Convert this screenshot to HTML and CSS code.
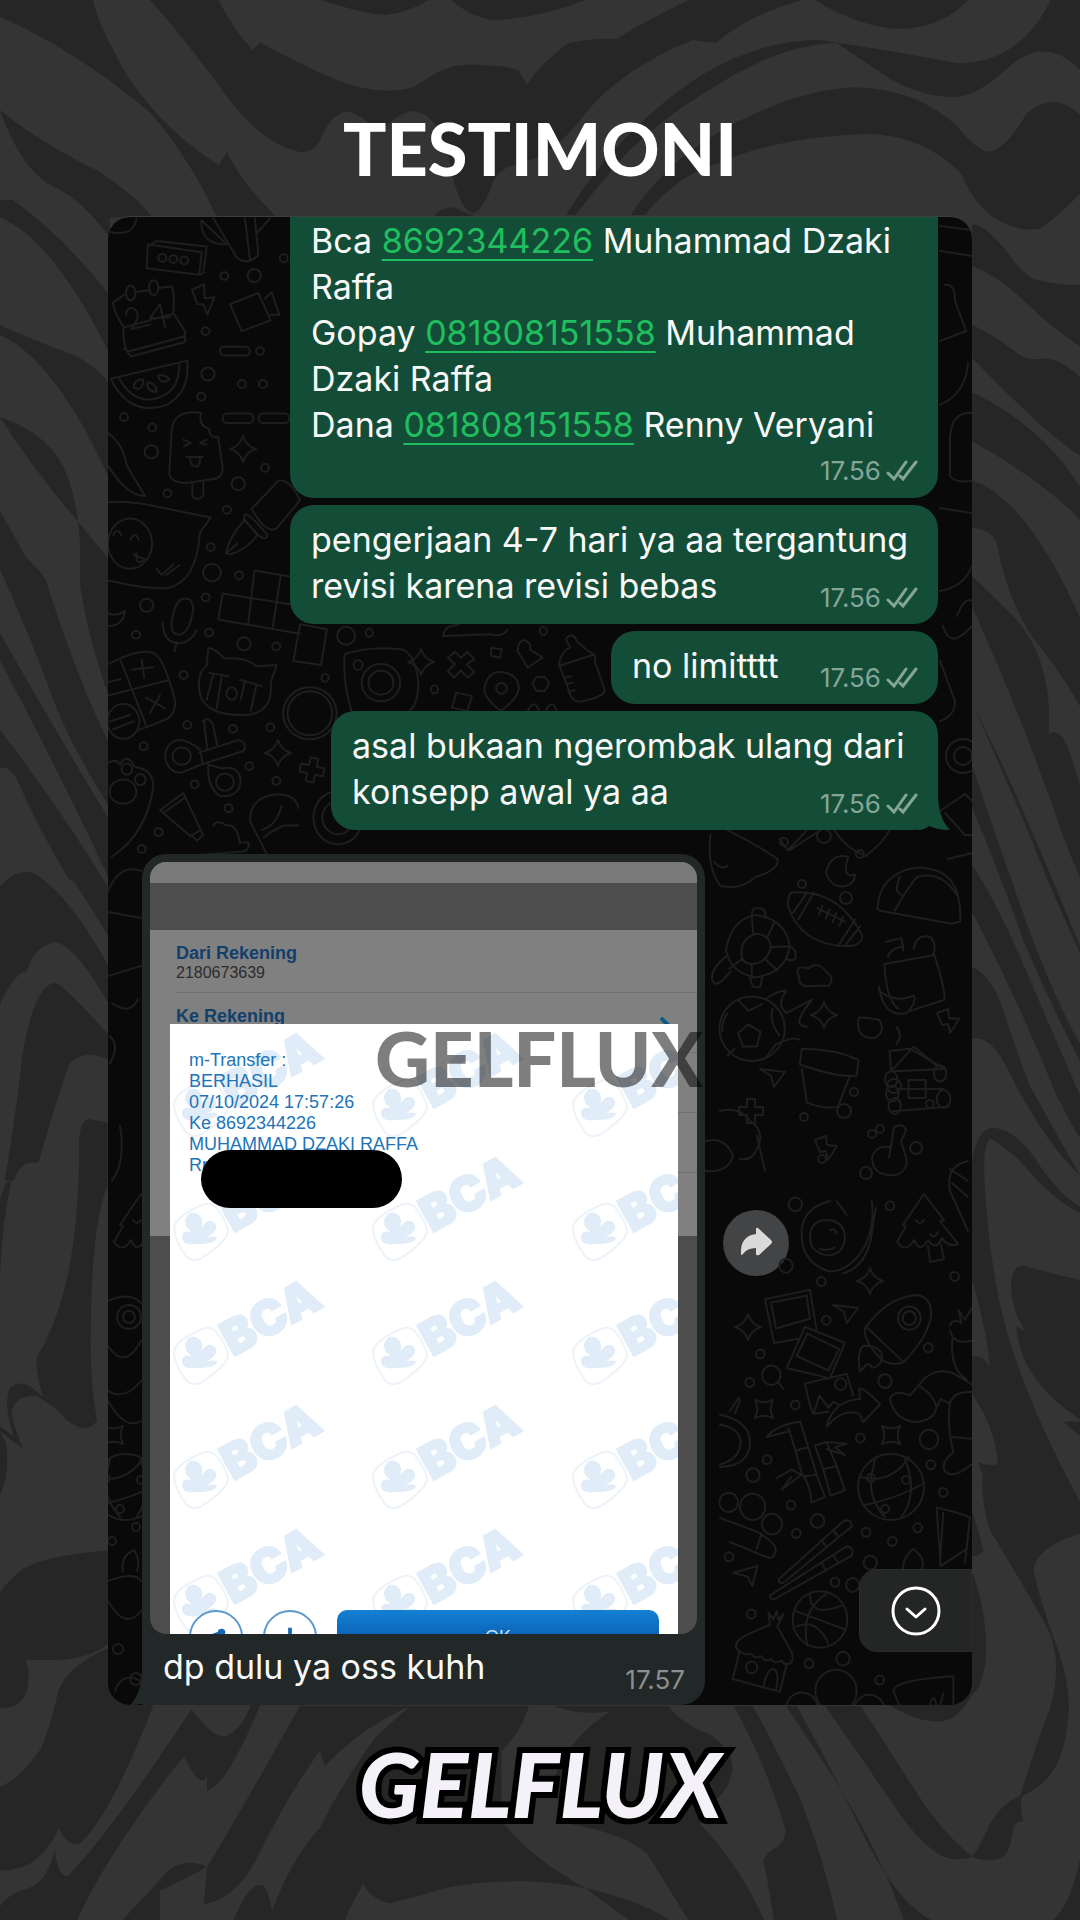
FILE: index.html
```html
<!DOCTYPE html>
<html lang="id">
<head>
<meta charset="utf-8">
<meta name="viewport" content="width=device-width, initial-scale=1">
<title>Testimoni – Gelflux</title>
<link rel="stylesheet" href="styles.css">
</head>
<body>
<svg class="marble" viewBox="0 0 1080 1920" preserveAspectRatio="xMidYMid slice" aria-hidden="true">
  <g transform="scale(.6888 .3333)">
    <path d="M0 0H135Q145 80 165 150Q185 240 215 310Q260 420 318 495L330 455Q345 530 400 650H315Q280 490 220 340Q110 150 0 50Z"/>
    <path d="M0 330Q60 430 140 510Q200 590 220 650H135Q110 590 70 550Q30 500 0 330Z"/>
    <path d="M218 0H317Q340 90 367 150L378 127Q430 190 490 240Q550 290 600 262C640 210 650 190 700 195Q740 198 753 212L765 255Q780 200 825 130Q850 115 895 116Q940 60 1000 0H1165Q1080 50 1040 128Q1020 125 1005 120Q900 210 850 340Q810 450 770 480Q725 500 717 540Q700 640 685 640Q665 620 655 500Q640 340 600 333Q580 335 550 400Q520 330 500 336Q480 345 465 420Q455 460 435 456Q380 430 330 290Q270 120 218 0Z"/>
    <path d="M465 0Q530 42 560 45Q590 40 622 0ZM655 0Q690 60 722 60Q790 50 850 0ZM1183 0Q1250 85 1310 87Q1370 80 1405 0ZM630 650Q640 620 660 622L690 650Z"/>
    <path d="M822 645Q870 480 940 350Q1060 120 1190 120Q1290 150 1390 190Q1480 190 1525 0H1568V210Q1520 110 1470 190Q1420 290 1385 292Q1330 290 1280 220L1215 130Q1150 130 1070 220Q940 370 880 530L835 645Z"/>
    <path d="M916 645Q960 500 1040 400Q1150 270 1240 262Q1330 265 1390 380Q1420 455 1435 455Q1460 450 1490 340Q1530 270 1568 345V580Q1540 640 1510 685Q1480 695 1460 670Q1420 640 1395 520Q1340 405 1260 402Q1130 410 1040 490Q980 530 936 645Z"/>
  </g>
  <g transform="translate(0 200) scale(.3333 .4337)">
    <path d="M0 0H40Q200 90 330 220V355Q160 90 0 40ZM240 0H400L460 40H330V85ZM625 0H780L830 40H655ZM0 287Q60 310 180 345Q280 370 330 425V645Q170 370 0 310ZM0 500Q160 540 205 640Q230 700 234 740L330 830V1150Q260 1000 240 880Q245 790 234 740Q120 640 0 500ZM0 715L80 825Q130 860 140 880Q230 1100 330 1255V1400Q230 1280 170 1170Q90 1000 0 850ZM0 997Q180 1240 330 1430V1568Q200 1350 0 1060ZM0 1220Q160 1400 290 1568H210Q130 1470 50 1325Q30 1300 0 1308Z"/>
  </g>
  <g transform="translate(0 480) scale(.3444 .4464)">
    <path d="M0 558Q180 740 314 910V1020Q220 900 180 860Q120 790 50 670Q30 640 0 643ZM0 910Q60 860 110 885Q200 930 314 1085V1170Q210 1030 155 1035Q100 1045 78 1100Q45 1100 0 1175Z"/>
    <path d="M15 1568Q50 1400 65 1290Q100 1130 160 1125Q180 1125 314 1240V1297Q240 1270 200 1310Q160 1400 112 1528Q60 1520 42 1568Z"/>
  </g>
  <g transform="translate(0 1100) scale(.3333 .523)">
    <path d="M0 190Q10 170 20 155H35Q0 250 0 380Z"/>
    <path d="M265 35Q240 40 238 80Q240 250 190 370Q160 440 112 490Q105 510 130 568Q70 525 30 550Q10 580 42 642L0 622V632L70 665Q40 620 35 595Q50 560 110 565Q160 580 200 610Q260 640 292 612Q270 540 273 440Q275 240 323 162V42Z"/>
    <path d="M0 632L20 655Q30 720 0 755ZM323 860Q120 870 60 900Q20 920 0 942V1160Q60 1165 80 1130Q95 1100 78 1068Q130 1070 200 1068Q290 1060 330 1035V860Z"/>
    <path d="M330 1045Q200 1080 175 1130Q140 1230 110 1250Q60 1295 0 1312V1472Q60 1470 100 1455Q150 1430 178 1390Q200 1425 240 1420Q330 1370 460 1157L400 1100Z"/>
    <path d="M0 1540Q30 1515 70 1508Q140 1500 165 1432Q175 1485 205 1482Q330 1400 575 1163Q640 1220 680 1215Q730 1200 755 1150H785Q680 1310 622 1318V1290Q600 1320 553 1252Q330 1430 230 1568H0Z"/>
    <path d="M900 1157H1230Q1080 1200 975 1272L960 1243Q860 1330 770 1450Q700 1530 612 1535L622 1465Q540 1440 480 1490L365 1568H480V1510L622 1465Q740 1340 900 1157ZM700 1568Q750 1490 790 1500Q810 1510 820 1568Z"/>
  </g>
  <g transform="translate(0 1640) scale(.6888 .3333)">
    <path d="M595 195H768Q755 280 728 330V540Q770 650 850 742Q750 700 650 740Q600 770 565 787Q535 770 528 728Q510 790 500 840H390Q420 660 465 560Q490 450 545 290Z"/>
    <path d="M805 195H970Q990 250 1030 280Q1070 340 1062 400Q1055 460 1030 490L1016 550Q1070 660 1110 840H1000L940 640Q910 580 830 550L800 440Q820 300 885 212Q840 225 805 195ZM850 742L915 840H975Q930 780 850 742Z"/>
  </g>
  <g transform="translate(940 200) scale(.3333 .574)">
    <path d="M96 42Q130 40 200 90Q260 140 300 140Q350 148 420 148V255Q350 230 250 175Q170 130 96 115ZM96 217Q160 235 240 270Q270 280 310 276Q350 272 420 308V445Q330 415 96 275ZM96 335Q300 390 420 500V557Q310 490 96 420ZM96 488Q260 520 420 728V882Q370 830 310 785Q210 720 170 600Q160 575 96 570Z"/>
    <path d="M96 655Q160 690 220 725Q340 800 325 930Q360 915 390 965L420 1020V1180Q380 1130 340 1060Q230 880 96 708ZM96 875L200 1000Q300 1130 420 1300V1312Q330 1200 250 1080ZM96 985Q180 1130 260 1260Q350 1400 420 1470V1500Q330 1400 250 1290Q170 1160 96 1058ZM96 1158Q180 1230 300 1400L420 1560V1568H355Q240 1400 96 1240ZM96 1335Q160 1350 200 1430Q240 1500 285 1568H252Q200 1510 180 1490Q140 1455 96 1460Z"/>
  </g>
  <g transform="translate(700 1080) scale(.3333 .5357)">
    <path d="M940 0H980Q1060 90 1140 178Q1040 120 940 0ZM1055 0H1110L1140 40V108Q1090 60 1055 0Z"/>
    <path d="M816 150Q830 90 878 88Q950 90 1020 160Q1080 215 1140 235V247Q1060 225 960 150Q900 118 870 108Q850 120 852 170Q860 300 900 420Q960 580 1140 787V845Q1010 870 1000 912Q1010 950 1060 1040Q1110 1120 1105 1180Q1095 1260 1050 1295Q1020 1320 965 1335Q958 1355 968 1382Q945 1380 938 1400Q930 1440 905 1450Q860 1460 816 1448Q720 1400 640 1320L482 1167H375Q480 1260 600 1370Q700 1455 770 1453Q800 1452 816 1448Q840 1430 870 1385Q910 1345 960 1335Q1000 1250 1050 1170Q1090 1080 1040 1020Q940 910 870 840Q840 780 848 735L832 712Q860 720 893 716Q890 670 850 620Q830 600 816 583V515Q850 510 868 535Q865 480 816 372Z"/>
    <path d="M816 805Q840 850 850 878Q835 887 816 888ZM816 918Q860 990 858 1070Q850 1130 816 1145Q770 1200 700 1196Q620 1190 560 1160L800 1100ZM1140 372Q1050 360 970 345Q930 345 933 390Q940 440 978 468Q960 462 948 458Q960 560 1140 632V662Q1110 650 1090 636L1140 636ZM1140 1450Q1110 1540 1055 1568H1140Z"/>
    <path d="M102 1167H158Q240 1260 300 1340Q370 1450 412 1568H222Q205 1500 190 1455Q200 1440 235 1428Q260 1415 255 1395Q200 1280 102 1167ZM258 1167H290Q400 1290 500 1420Q600 1540 700 1568H612Q540 1440 400 1300Z"/>
  </g>
</svg>

<main class="page">
  <h1 class="title">TESTIMONI</h1>

  <section class="chat" aria-label="Percakapan">
    <svg class="doodles" viewBox="108 216 864 1488" preserveAspectRatio="xMidYMin slice" aria-hidden="true">
      <defs>
        <path id="spark" d="M0-13Q3-3 13 0Q3 3 0 13Q-3 3-13 0Q-3-3 0-13Z"/>
        <path id="plus" d="M-4-12H4V-4H12V4H4V12H-4V4H-12V-4H-4Z"/>
        <path id="plane" d="M-13-8L12-5L1 10L-2-1Z"/>
        <path id="bolt" d="M-11-8L0-12L1-3L11-2L2 12L0 3L-6 4Z"/>
        <g id="tree"><path d="M0-34L20-8L16-7L34 16Q24 20 18 10Q12 24 4 12Q-4 26-10 12Q-18 26-27 14L-18-2L-21-3ZM4 18L6 34L20 31L17 17"/><path d="M-8-8Q-4-2 0-8M6 6Q10 12 14 4"/></g>
        <g id="globe"><circle r="33"/><path d="M-31-10Q0-2 18-30M-26 18Q10 10 33-4M-20-9Q-22 12-6 30M14-28Q28 6 10 31M-16-28L-20-9"/><circle cx="-20" cy="-9" r="4"/><circle cx="15" cy="-7" r="4"/><circle cx="-6" cy="22" r="4"/></g>
        <g id="dots"><circle cx="4" cy="6" r="4"/><circle cx="44" cy="0" r="7"/><circle cx="80" cy="18" r="4"/><circle cx="22" cy="48" r="4"/><circle cx="66" cy="62" r="6"/></g>
      </defs>
      <g transform="translate(0 200) scale(.3333 .4337)">
        <path d="M324 70Q400 85 410 40M440 155L443 105L470 92L620 105L610 165L600 170ZM605 120L598 168M443 100L605 118M605 45Q600 100 680 100L605 45M640 40L710 130Q740 150 775 125L765 40M735 40L750 135M770 75L810 40"/>
        <path d="M338 235L375 215M410 210L450 205M478 200L515 197Q525 210 520 258L555 300V325L395 358Q370 350 370 290Q345 260 338 235M370 292L520 260M372 340L385 347L555 312M576 205L612 192L614 224L643 222L622 262L610 238L592 238ZM690 238L775 212L812 275L725 300ZM795 225L815 210L838 262L812 262"/>
        <path d="M378 262Q382 240 405 250Q425 262 395 295L450 285M450 270L480 238L495 290M450 270L512 268"/>
        <path d="M332 410L562 368Q570 440 500 470Q390 500 332 410ZM355 406Q400 470 470 455Q540 440 538 374M400 430Q405 410 430 412Q430 440 400 430ZM442 418Q470 420 470 440Q440 440 442 418ZM475 402Q500 400 508 412Q480 425 475 402Z"/>
        <path d="M603 488Q520 480 515 530L508 630Q515 650 560 650L650 640Q675 630 665 600L655 545Q625 545 628 525Q595 520 603 488ZM577 650V680Q592 695 610 680V648M550 550L572 558L552 566M620 550L600 558L620 562M560 590H608M570 592Q572 615 592 612Q602 605 600 590"/>
        <path d="M324 535Q370 560 380 610L435 680Q380 680 324 610M324 695Q370 690 440 700L632 730L600 765Q590 880 500 893Q440 895 324 875M340 770Q350 752 364 770M392 780Q405 760 416 780M400 815L440 828M410 812Q405 840 430 830M470 848L485 862L520 838M498 862L538 840"/>
        <path d="M678 812Q690 770 735 735L772 770Q740 805 690 815ZM735 722Q755 725 802 770Q798 785 775 770L732 735ZM755 710L835 645Q870 640 900 690L830 755Q800 770 755 710ZM678 812L712 790M655 965L668 905L870 930M655 965L900 998M745 975L763 852L870 866M818 985L842 865M324 980Q370 980 375 945Q350 960 324 950"/>
        <path d="M515 970Q510 1000 540 1000Q570 995 580 940Q575 910 545 918Q525 925 515 970ZM488 972Q490 1020 540 1020Q575 1015 590 990M530 1018L524 1038M324 1068Q420 1030 460 1042Q490 1050 525 1150Q530 1180 500 1195L415 1220M362 1060L440 1212M324 1140L505 1105M397 1080L460 1075M425 1058L433 1100M438 1145L495 1170M480 1140L450 1180M330 1200L390 1185M340 1218L400 1200M324 1110L362 1102"/>
        <path d="M625 1030Q640 1030 675 1055Q740 1050 768 1073L830 1070L812 1110Q820 1180 740 1185Q590 1190 597 1110Q600 1080 620 1072ZM628 1088L685 1096M720 1104L785 1118M640 1092L620 1150M665 1096L650 1170M770 1115L752 1175M735 1108L722 1150"/>
        <path d="M600 1265Q560 1240 530 1243Q490 1255 497 1290Q510 1320 545 1318L608 1298ZM598 1272L715 1243Q745 1250 730 1268L610 1298M608 1200Q625 1188 638 1205L652 1255M612 1200L622 1265M625 1300Q620 1350 660 1372Q720 1375 722 1335Q715 1300 665 1308ZM480 1405L550 1365L602 1450L572 1465ZM492 1410L556 1375M575 1462L590 1475L610 1462L602 1450"/>
        <path d="M324 1295Q350 1285 360 1300Q380 1270 405 1305Q460 1310 460 1350Q440 1460 335 1512M750 1430Q750 1370 840 1368Q890 1372 895 1400M750 1430L800 1505M785 1450Q830 1440 845 1395M790 1468Q820 1450 850 1440L895 1440M640 1440Q650 1425 680 1440Q710 1435 720 1480L745 1478Q750 1495 730 1500L560 1510"/>
        <rect x="660" y="336" width="90" height="20" rx="12"/><rect x="668" y="490" width="92" height="22" rx="12"/><rect x="776" y="490" width="92" height="22" rx="12"/>
        <ellipse cx="390" cy="790" rx="66" ry="58"/><ellipse cx="545" cy="1280" rx="28" ry="20"/><ellipse cx="675" cy="1340" rx="27" ry="20"/><ellipse cx="369" cy="1362" rx="40" ry="28"/><ellipse cx="381" cy="1310" rx="16" ry="13"/><ellipse cx="421" cy="1334" rx="16" ry="13"/><ellipse cx="370" cy="1200" rx="48" ry="40"/><ellipse cx="695" cy="1136" rx="16" ry="14"/><ellipse cx="392" cy="212" rx="14" ry="17"/><ellipse cx="461" cy="200" rx="14" ry="17"/>
        <ellipse cx="763" cy="172" rx="20" ry="15"/><ellipse cx="624" cy="399" rx="20" ry="15"/><ellipse cx="454" cy="578" rx="20" ry="15"/><ellipse cx="715" cy="652" rx="20" ry="15"/><ellipse cx="636" cy="857" rx="27" ry="20"/><ellipse cx="440" cy="932" rx="20" ry="15"/><ellipse cx="732" cy="1021" rx="20" ry="15"/>
        <g class="pips"><ellipse cx="487" cy="131" rx="12" ry="9"/><ellipse cx="520" cy="134" rx="12" ry="9"/><ellipse cx="553" cy="137" rx="12" ry="9"/><ellipse cx="673" cy="173" rx="12" ry="9"/><ellipse cx="851" cy="132" rx="12" ry="9"/><ellipse cx="617" cy="300" rx="12" ry="9"/><ellipse cx="780" cy="346" rx="12" ry="9"/><ellipse cx="726" cy="422" rx="12" ry="9"/><ellipse cx="789" cy="422" rx="12" ry="9"/><ellipse cx="604" cy="451" rx="12" ry="9"/><ellipse cx="372" cy="498" rx="12" ry="9"/><ellipse cx="457" cy="522" rx="12" ry="9"/><ellipse cx="795" cy="615" rx="12" ry="9"/><ellipse cx="502" cy="674" rx="12" ry="9"/><ellipse cx="681" cy="712" rx="12" ry="9"/><ellipse cx="632" cy="798" rx="12" ry="9"/><ellipse cx="717" cy="863" rx="12" ry="9"/><ellipse cx="617" cy="914" rx="12" ry="9"/><ellipse cx="627" cy="995" rx="12" ry="9"/><ellipse cx="408" cy="1000" rx="12" ry="9"/><ellipse cx="829" cy="1027" rx="12" ry="9"/><ellipse cx="551" cy="1093" rx="12" ry="9"/><ellipse cx="562" cy="1208" rx="12" ry="9"/><ellipse cx="699" cy="1217" rx="12" ry="9"/><ellipse cx="811" cy="1214" rx="12" ry="9"/><ellipse cx="431" cy="1257" rx="12" ry="9"/><ellipse cx="748" cy="1303" rx="12" ry="9"/><ellipse cx="584" cy="1345" rx="12" ry="9"/><ellipse cx="829" cy="1337" rx="12" ry="9"/><ellipse cx="686" cy="1400" rx="12" ry="9"/><ellipse cx="476" cy="1455" rx="12" ry="9"/><ellipse cx="425" cy="1494" rx="12" ry="9"/></g>
      </g>
      <use href="#spark" x="243" y="448"/><use href="#spark" x="278" y="752"/>
      <g transform="translate(280 480) scale(.4464 .3333)">
        <path d="M30 540L45 430L105 445L92 552ZM145 520Q200 495 270 505Q300 510 310 600Q310 670 290 690M145 520Q140 600 160 690M376 530L392 512L405 530L420 512L435 535L418 550L435 572L420 590L405 568L390 590L376 570L392 550ZM473 500L497 505L493 530L473 525ZM535 490Q545 465 560 490V505L588 530L555 560L532 510ZM625 550Q630 510 650 500L640 475Q655 450 665 480L690 510Q710 520 705 540L728 630Q720 650 672 662Q650 660 645 620ZM625 555L705 520M638 590L652 586M642 610L655 605M646 632L660 628M495 690Q455 650 458 620Q465 570 497 573Q535 580 535 625Q530 655 495 690ZM565 607L575 588H593L603 607L593 630H575ZM395 635L430 645L420 690L385 680ZM365 465Q370 430 400 432M365 465L470 460Q500 470 510 445M555 690Q570 650 580 690M595 690Q610 650 620 690"/>
        <ellipse cx="226" cy="605" rx="43" ry="56"/><ellipse cx="226" cy="605" rx="28" ry="36"/><ellipse cx="67" cy="697" rx="60" ry="78"/><ellipse cx="67" cy="697" rx="50" ry="66"/><ellipse cx="496" cy="622" rx="12" ry="16"/><ellipse cx="148" cy="464" rx="20" ry="27"/><ellipse cx="175" cy="552" rx="10" ry="14"/><ellipse cx="101" cy="590" rx="8" ry="12"/><ellipse cx="346" cy="625" rx="8" ry="12"/><ellipse cx="590" cy="450" rx="8" ry="12"/><ellipse cx="200" cy="455" rx="8" ry="12"/><ellipse cx="130" cy="1010" rx="55" ry="80"/><ellipse cx="130" cy="1010" rx="35" ry="50"/>
      </g>
      <use href="#spark" x="421" y="661"/><use href="#plus" x="312" y="769" transform="rotate(12 312 769)"/>
      <g transform="translate(707 780) scale(.3444 .4464)">
        <path d="M10 120Q0 200 40 235Q100 245 140 215Q210 200 205 175Q160 150 60 110M20 180Q40 200 60 190M210 130L235 155L290 110M240 155L270 140L330 110M370 110Q400 150 460 168Q510 140 530 110M410 170Q360 160 345 205Q360 240 400 235Q430 230 430 210Q390 220 410 170Z"/>
        <path d="M245 250Q380 240 450 345Q455 370 400 370Q270 365 235 280Q235 255 245 250ZM290 250L250 295M310 250L265 310M430 310L380 370M445 325L400 370M320 285L400 315M325 300L335 280M345 308L355 288M365 316L375 296M385 324L395 304M495 285Q500 235 540 215Q600 180 680 205Q740 230 735 315L710 320L500 290ZM545 290Q590 230 610 215Q680 200 725 255M560 215Q540 250 565 255"/>
        <path d="M55 380Q70 310 140 300Q230 310 240 370Q230 430 140 440Q70 430 55 380ZM100 385Q100 350 145 342Q185 345 185 375Q170 410 130 410Q100 410 100 385ZM130 303L135 345M195 318L175 350M238 370L185 372M205 425L170 400M130 440V410M65 420L102 398M130 303Q130 280 150 285Q170 285 170 302M240 370Q265 380 255 400Q235 405 230 395M125 440Q130 470 155 460L160 440M60 390Q10 420 15 445Q25 470 70 425"/>
        <path d="M268 440Q250 410 295 420Q320 400 350 430Q370 440 355 458L285 460Q265 455 268 440ZM525 395Q530 375 570 370M515 410Q520 490 555 510M515 410L660 390Q690 460 690 490L590 515M520 360L565 352L570 380M600 375Q610 340 650 350Q670 370 655 390M500 470Q550 500 600 480Q610 495 580 520Q510 530 500 460ZM440 530Q460 530 500 535Q520 560 490 575Q430 580 440 530Z"/>
        <ellipse cx="131" cy="555" rx="95" ry="72"/><path d="M90 565L120 545L155 562L145 595H105ZM90 490L120 515L160 500M60 520Q40 540 45 560M190 510Q180 540 210 570M80 600L60 615M170 620L200 590M170 490Q200 470 230 470Q200 500 230 520L305 490Q240 550 290 550M200 590Q250 570 270 580"/>
        <path d="M275 600Q370 600 440 625L435 660Q380 665 270 635ZM275 645L290 720Q330 735 380 730L415 660M530 605L590 600L690 645L535 650ZM535 650L600 595L670 640M550 690L685 690M540 740L700 730M585 670H635V710H585ZM550 550Q570 570 550 590"/><circle cx="535" cy="668" r="18"/><circle cx="538" cy="700" r="18"/><circle cx="545" cy="728" r="18"/><circle cx="677" cy="655" r="18"/><circle cx="687" cy="712" r="20"/>
      </g>
      <use href="#spark" x="824" y="1014"/><use href="#plane" x="773" y="1076"/><use href="#plus" x="751" y="1110"/><use href="#bolt" x="948" y="1020"/><use href="#bolt" x="826" y="1147"/>
      <g transform="translate(720 1200) scale(.3333 .3444)">
        <path d="M245 85Q250 20 330 0M245 85Q240 180 330 205Q400 200 440 120Q465 60 455 0M370 210Q450 190 460 60L468 20M270 105Q270 55 325 55Q375 60 375 110Q370 155 325 158Q270 150 270 105ZM350 0L380 40M300 140Q330 145 345 135M330 85Q345 75 350 95"/>
        <path d="M135 285L270 258L290 375M135 285L162 412L235 400M153 295L260 275L270 342L168 370ZM255 365L375 412L330 515L200 485ZM262 385L358 430L325 492L230 450ZM255 530L380 502L400 565M255 530Q270 600 280 618L325 612M282 615L298 565L325 600L340 583L355 590M320 655Q340 580 420 575L418 545Q430 540 480 590L430 642L418 618Q370 600 320 655Z"/>
        <path d="M435 370Q500 280 590 273Q640 280 632 340Q620 400 550 468Q520 480 490 465Q430 410 435 370ZM438 365L548 465M420 495Q410 440 430 420Q470 420 485 440Q490 480 455 485Q450 465 435 480ZM510 575Q520 545 570 565L600 530Q640 480 700 500L760 535M510 575Q520 630 580 642Q640 640 650 600Q640 560 600 538M650 600L662 575L690 588Q700 550 760 555M690 588Q680 650 700 730Q660 760 675 785Q700 810 760 760M695 685L756 690M690 360Q700 340 725 355L715 315L735 345L756 310M690 375Q700 420 756 405M697 400Q690 490 740 518"/>
        <path d="M140 685Q170 650 240 640L265 715L290 795L315 860L275 875Q270 820 245 790L225 720L205 660M140 685L210 668M170 805L215 780L245 795L185 838L215 800M285 710L320 700L350 770L375 840L332 855L310 780ZM320 700L380 705L345 715L375 738L320 720M225 725L265 715M250 800L290 795M312 778L350 770"/>
        <path d="M0 920L110 960Q180 1000 165 1020Q160 1045 130 1030L30 990M110 1010L125 965M175 1100L370 930Q395 920 395 945L195 1105Q180 1115 175 1100ZM150 1145L380 1003Q405 1005 395 1030L165 1155Q150 1160 150 1145ZM340 955L355 975M305 985L320 1005M340 1030L355 1050M305 1050L318 1075M40 1080L112 1060L97 1118L82 1090ZM50 1300Q40 1280 80 1260L150 1230L145 1195L160 1215L170 1190L175 1215L190 1200L172 1235L215 1310Q225 1345 200 1345Q190 1345 185 1335Q160 1345 155 1330Q130 1340 125 1322Q100 1330 95 1315Q70 1320 50 1300ZM58 1310L38 1388L180 1425L200 1345M130 1412Q140 1360 160 1358Q180 1365 168 1420"/>
        <path d="M225 1190L378 1245M270 1145Q270 1210 365 1175M230 1235Q290 1210 325 1285M320 1140Q240 1190 262 1290M650 890Q700 900 750 918L740 1010L662 1060ZM670 905L660 1050M750 918L735 1050M520 1420Q530 1390 700 1380V1466M520 1420Q530 1450 540 1466M630 1466Q640 1420 650 1466M660 1466L670 1430M550 1068Q545 1040 580 1010Q620 1040 605 1068M0 620Q90 640 90 700Q90 770 0 772M0 650Q60 660 62 700Q60 750 0 765M30 610L55 572L60 580L45 615"/>
        <circle cx="300" cy="1215" r="82"/><circle cx="154" cy="506" r="28"/><path d="M173 525L190 545"/><circle cx="568" cy="340" r="34"/><circle cx="568" cy="340" r="20"/><circle cx="362" cy="532" r="17"/><circle cx="95" cy="1354" r="17"/><circle cx="26" cy="875" r="28"/><circle cx="98" cy="888" r="38"/><circle cx="156" cy="938" r="30"/><circle cx="348" cy="1423" r="62"/><circle cx="246" cy="1475" r="48"/><circle cx="448" cy="1480" r="46"/>
        <circle cx="495" cy="523" r="20"/><circle cx="627" cy="692" r="28"/><circle cx="99" cy="796" r="20"/><circle cx="293" cy="929" r="20"/><circle cx="451" cy="1050" r="20"/><circle cx="398" cy="1115" r="20"/><circle cx="369" cy="1329" r="20"/><circle cx="226" cy="10" r="20"/><circle cx="198" cy="188" r="20"/>
        <g class="pips"><circle cx="510" cy="14" r="13"/><circle cx="304" cy="234" r="13"/><circle cx="704" cy="219" r="13"/><circle cx="319" cy="346" r="13"/><circle cx="121" cy="444" r="13"/><circle cx="89" cy="527" r="13"/><circle cx="226" cy="592" r="13"/><circle cx="625" cy="426" r="13"/><circle cx="421" cy="688" r="13"/><circle cx="632" cy="766" r="13"/><circle cx="141" cy="751" r="13"/><circle cx="213" cy="883" r="13"/><circle cx="229" cy="965" r="13"/><circle cx="670" cy="846" r="13"/><circle cx="593" cy="949" r="13"/><circle cx="438" cy="962" r="13"/><circle cx="517" cy="988" r="13"/><circle cx="345" cy="1107" r="13"/><circle cx="27" cy="1033" r="13"/><circle cx="94" cy="1199" r="13"/><circle cx="267" cy="1343" r="13"/><circle cx="479" cy="1391" r="13"/></g>
      </g>
      <use href="#tree" x="924" y="1227"/><use href="#globe" x="891" y="1486"/><use href="#spark" x="870" y="1280"/><use href="#spark" x="748" y="1326"/><use href="#plane" x="846" y="1312"/><use href="#spark" x="764" y="1408" transform="rotate(45 764 1408)"/><use href="#spark" x="891" y="1434" transform="rotate(45 891 1434)"/>
      <use href="#dots" x="780" y="835"/><use href="#dots" x="800" y="1110"/><use href="#dots" x="850" y="1085"/>
      <path d="M889 1157L894 1126Q904 1121 906 1130L901 1140L904 1150Q912 1168 896 1174Q872 1176 872 1156Q876 1144 889 1146M720 1110Q740 1105 750 1120Q766 1130 757 1148Q752 1160 740 1158M706 1140Q725 1135 733 1155Q728 1172 706 1170M757 1135L765 1170M968 1160Q945 1165 950 1190L968 1230M950 1168L968 1180M952 1182L968 1196M940 225L972 229M940 250L972 255M945 284Q955 282 955 300L966 330L940 340M968 362Q966 392 940 404M972 412Q950 410 950 440V475Q955 482 972 480M940 507L972 512M940 590Q965 585 972 565M957 615Q965 595 972 600M972 625Q950 650 943 625M940 660L955 700Q955 715 940 720M940 810L965 793L972 800M945 812L965 834H972M948 858L972 852"/>
      <circle cx="963" cy="755" r="17"/><circle cx="963" cy="755" r="9"/>
      <use href="#tree" x="141" y="1227"/><use href="#globe" x="126" y="1486"/><use href="#spark" x="114" y="1434" transform="rotate(45 114 1434)"/>
      <path d="M108 1300Q130 1290 141 1302M108 1345Q125 1370 141 1340M108 1390Q125 1400 141 1380M108 1400Q125 1430 141 1420M120 1125Q126 1160 112 1180M108 890Q120 862 141 870M108 911L141 917M108 975L141 965M112 1002Q130 1015 138 998M110 1035Q120 1045 110 1062M108 1580Q135 1570 141 1580M108 1600Q125 1630 141 1610M123 1570Q120 1555 134 1549Q141 1560 137 1570M115 1690Q122 1670 141 1680"/><circle cx="129" cy="1316" r="12"/><circle cx="129" cy="1316" r="6"/><circle cx="112" cy="1540" r="4"/><circle cx="136" cy="1526" r="4"/><circle cx="118" cy="1648" r="5"/><circle cx="136" cy="1678" r="6"/>
    </svg>

    <article class="bubble out wide first">
      <p class="text">Bca <a href="tel:8692344226">8692344226</a> Muhammad Dzaki<br>Raffa<br>Gopay <a href="tel:081808151558">081808151558</a> Muhammad<br>Dzaki Raffa<br>Dana <a href="tel:081808151558">081808151558</a> Renny Veryani</p>
      <p class="meta"><time>17.56</time><svg class="ticks" viewBox="0 0 32 22" aria-hidden="true"><path d="M2 13L8 19L20 2M14 16L17 19L30 2"/></svg></p>
    </article>
    <article class="bubble out wide">
      <p class="text">pengerjaan 4-7 hari ya aa tergantung<br>revisi karena revisi bebas</p>
      <p class="meta"><time>17.56</time><svg class="ticks" viewBox="0 0 32 22" aria-hidden="true"><path d="M2 13L8 19L20 2M14 16L17 19L30 2"/></svg></p>
    </article>
    <article class="bubble out short">
      <p class="text">no limitttt</p>
      <p class="meta"><time>17.56</time><svg class="ticks" viewBox="0 0 32 22" aria-hidden="true"><path d="M2 13L8 19L20 2M14 16L17 19L30 2"/></svg></p>
    </article>
    <article class="bubble out medium">
      <p class="text">asal bukaan ngerombak ulang dari<br>konsepp awal ya aa</p>
      <p class="meta"><time>17.56</time><svg class="ticks" viewBox="0 0 32 22" aria-hidden="true"><path d="M2 13L8 19L20 2M14 16L17 19L30 2"/></svg></p>
      <svg class="tail-out" viewBox="0 0 32 36" aria-hidden="true"><path d="M20 0Q20 24 32 36Q20 36 11 32Q6 36 0 36V0Z"/></svg>
    </article>

    <div class="incoming">
      <article class="photo-bubble">
        <figure class="receipt">
          <div class="strip-top"></div>
          <div class="strip-bar"></div>
          <div class="accounts">
            <div class="account">
              <strong>Dari Rekening</strong>
              <span>2180673639</span>
            </div>
            <div class="account">
              <strong>Ke Rekening</strong>
              <svg class="arrow" viewBox="0 0 12 20" aria-hidden="true"><path d="M1 1L10 10L1 19"/></svg>
            </div>
            <div class="account"></div>
            <div class="account"></div>
          </div>
          <div class="dialog">
            <svg class="bank-marks" viewBox="0 0 508 610" preserveAspectRatio="xMinYMin slice" aria-hidden="true">
              <defs>
                <g id="mark">
                  <path class="frame" d="M-26-4Q-24-16 2-27Q12-31 18-22Q28-8 28 0Q26 10 2 26Q-8 31-14 24Q-26 8-26-4Z"/>
                  <path d="M-3 12Q-17 14-18 6Q-18-2-9 0Q-5 2-3 9Q-9-2-13-4Q-18-13-10-19Q-1-21 2-12Q3-6-2 6Q1-8 8-11Q17-12 16-3Q12 4 1 8Q10 3 17 5Q17 12-3 12Z"/>
                  <text transform="translate(33 1) rotate(-29)">BCA</text>
                </g>
              </defs>
              <use href="#mark" x="30" y="84"/><use href="#mark" x="229" y="84"/><use href="#mark" x="429" y="84"/>
              <use href="#mark" x="30" y="208"/><use href="#mark" x="229" y="208"/><use href="#mark" x="429" y="208"/>
              <use href="#mark" x="30" y="332"/><use href="#mark" x="229" y="332"/><use href="#mark" x="429" y="332"/>
              <use href="#mark" x="30" y="456"/><use href="#mark" x="229" y="456"/><use href="#mark" x="429" y="456"/>
              <use href="#mark" x="30" y="580"/><use href="#mark" x="229" y="580"/><use href="#mark" x="429" y="580"/>
            </svg>
            <p class="transfer">m-Transfer :<br>BERHASIL<br>07/10/2024 17:57:26<br>Ke 8692344226<br>MUHAMMAD DZAKI RAFFA<br>Rp</p>
            <div class="redaction"></div>
            <div class="actions">
              <button class="round" type="button" aria-label="Bagikan"><svg viewBox="0 0 54 54" aria-hidden="true"><path d="M17 28L33 22L17 30L34 38"/><circle cx="33" cy="22" r="2"/><circle cx="18" cy="29" r="2"/></svg></button>
              <button class="round" type="button" aria-label="Unduh"><svg viewBox="0 0 54 54" aria-hidden="true"><path d="M27 17V34M19 28L27 36L35 28"/></svg></button>
              <button class="ok" type="button">OK</button>
            </div>
          </div>
        </figure>
        <div class="caption"><p class="text">dp dulu ya oss kuhh</p><time>17.57</time></div>
        <svg class="tail-in" viewBox="0 0 32 36" aria-hidden="true"><path d="M12 0Q12 24 0 36Q12 36 21 32Q26 36 32 36V0Z"/></svg>
        <span class="watermark">GELFLUX</span>
      </article>
      <button class="share" type="button" aria-label="Teruskan"><svg viewBox="0 0 66 66" aria-hidden="true"><path d="M18 44Q17 26 33 24V19Q33 17 35 18L48 30Q50 32 48 34L36 45Q33 46 33 44V38Q24 38 20 44Q18 46 18 44Z"/></svg></button>
    </div>

    <button class="to-bottom" type="button" aria-label="Ke pesan terbaru"><svg viewBox="0 0 50 50" aria-hidden="true"><circle cx="25" cy="25" r="23"/><path d="M16 23L25 31L34 23"/></svg></button>
  </section>

  <footer class="brand">GELFLUX</footer>
</main>
</body>
</html>
```
FILE: styles.css
```css
* { box-sizing: border-box; }

body {
  margin: 0;
  min-height: 100vh;
  position: relative;
  overflow-x: hidden;
  background: #343434;
  color: #f7f8f7;
  font-family: Inter, "Liberation Sans", sans-serif;
}

p, h1, figure { margin: 0; }

button {
  border: 0;
  padding: 0;
  font: inherit;
  cursor: pointer;
}

.marble {
  position: absolute;
  inset: 0;
  width: 100%;
  height: 100%;
  fill: #262626;
}

.page {
  position: relative;
  padding: 102px 10% 0;
}

.title {
  height: 114px;
  font: 900 72px/92px Lato, sans-serif;
  text-align: center;
  color: #fff;
}

/* chat window */
.chat {
  position: relative;
  display: flex;
  flex-direction: column;
  align-items: flex-end;
  gap: 7px;
  padding: 0 34px;
  overflow: hidden;
  border-radius: 22px;
  border-top: 1px solid #3c3f3e;
  background: #090909;
}

.doodles {
  position: absolute;
  inset: 0;
  width: 100%;
  height: 100%;
  fill: none;
  stroke: #1d1e1e;
  stroke-width: 2;
  stroke-linejoin: round;
  stroke-linecap: round;
}
.doodles * { vector-effect: non-scaling-stroke; }

.text {
  font-size: 34px;
  line-height: 46px;
}
.text a {
  color: #1fbe5f;
  text-decoration-thickness: 2px;
  text-underline-offset: 6px;
}

.bubble {
  position: relative;
  display: grid;
  padding: 12px 20px 15px 21px;
  border-radius: 24px;
  background: #144d37;
}
.bubble > .text, .bubble > .meta { grid-area: 1 / 1; }
.wide { width: 648px; max-width: 100%; }
.medium { width: 607px; max-width: 100%; }
.short { width: 327px; }

.bubble.first {
  padding: 1px 20px 15px 21px;
  border-radius: 0 0 24px 24px;
}
.bubble.first > .meta {
  grid-area: 2 / 1;
  height: 35px;
  padding-top: 11px;
}

.meta {
  display: flex;
  align-items: center;
  align-self: end;
  justify-self: end;
  gap: 5px;
  height: 22px;
}
time {
  font-size: 26px;
  line-height: 24px;
  color: #85a598;
}
.ticks {
  width: 32px;
  height: 22px;
  fill: none;
  stroke: #85a598;
  stroke-width: 3;
  stroke-linecap: round;
}

.tail-out, .tail-in {
  position: absolute;
  bottom: 0;
  width: 32px;
  height: 36px;
}
.tail-out { right: -12px; fill: #144d37; }
.tail-in { left: -12px; fill: #222727; }

/* incoming picture message */
.incoming {
  display: flex;
  align-items: center;
  align-self: flex-start;
  gap: 18px;
  margin-top: 17px;
}
.photo-bubble {
  position: relative;
  width: 563px;
  padding: 8px 8px 0;
  border-radius: 24px 24px 24px 0;
  background: #222727;
}
.receipt {
  position: relative;
  height: 772px;
  overflow: hidden;
  border-radius: 16px;
  background: #4d4d4d;
  font-family: "Liberation Sans", sans-serif;
}
.strip-top { height: 21px; background: #797979; }
.strip-bar { height: 47px; }
.accounts {
  height: 306px;
  padding-left: 26px;
  background: #808080;
}
.account {
  position: relative;
  display: flex;
  flex-direction: column;
  height: 60px;
  border-bottom: 1px solid #707070;
}
.account:first-child { height: 63px; }
.account strong {
  padding-top: 13px;
  font-size: 18px;
  line-height: 20px;
  color: #123f6b;
}
.account span {
  font-size: 16px;
  line-height: 20px;
  color: #2c2c2c;
}
.arrow {
  position: absolute;
  right: 25px;
  top: 24px;
  width: 12px;
  height: 20px;
  fill: none;
  stroke: #0a5a85;
  stroke-width: 4;
}

.dialog {
  position: absolute;
  inset: 162px 19px 0 20px;
  display: flex;
  flex-direction: column;
  background: #fff;
}
.bank-marks {
  position: absolute;
  inset: 0;
  width: 100%;
  height: 100%;
  fill: #e0ecf7;
  font: 900 48px Inter, sans-serif;
}
.bank-marks text { stroke: #e0ecf7; stroke-width: 2; }
.frame { fill: none; stroke: #edf3f8; stroke-width: 2; }
.transfer {
  position: relative;
  padding: 26px 0 0 19px;
  font-size: 18px;
  line-height: 21px;
  color: #2074b8;
}
.redaction {
  position: relative;
  width: 201px;
  height: 58px;
  margin: -26px 0 0 31px;
  border-radius: 29px;
  background: #000;
}
.actions {
  position: absolute;
  left: 19px;
  right: 19px;
  top: 586px;
  display: flex;
  gap: 20px;
}
.round {
  width: 54px;
  height: 54px;
  border: 2px solid #5b98cb;
  border-radius: 50%;
  background: #fff;
}
.round svg {
  display: block;
  fill: #1467b5;
  stroke: #1467b5;
  stroke-width: 4;
}
.ok {
  flex: 1;
  height: 54px;
  border-radius: 10px;
  background: linear-gradient(#1380d3, #04479b);
  color: #cfe2f5;
  font-size: 18px;
}

.caption {
  display: flex;
  justify-content: space-between;
  height: 71px;
  padding: 10px 12px 0 13px;
}
.caption time {
  align-self: flex-end;
  margin-bottom: 13px;
  color: #8c8f8f;
}

.watermark {
  position: absolute;
  left: 233px;
  top: 158px;
  font: 900 76px/92px Lato, sans-serif;
  color: #000;
  opacity: .5;
}

.share {
  width: 66px;
  height: 66px;
  margin-bottom: 74px;
  border-radius: 50%;
  background: #434446;
}
.share svg { display: block; fill: #dadada; }

.to-bottom {
  position: absolute;
  right: 0;
  bottom: 53px;
  width: 113px;
  height: 83px;
  border: 1px solid #2b2d2d;
  border-radius: 18px 0 0 18px;
  background: #232625;
}
.to-bottom svg {
  display: block;
  width: 50px;
  height: 50px;
  margin-left: 31px;
  fill: none;
  stroke: #fff;
  stroke-width: 3;
  stroke-linecap: round;
  stroke-linejoin: round;
}

.brand {
  padding: 24px 0 84px;
  font: italic 900 90px/108px Lato, sans-serif;
  text-align: center;
  color: #f4f2f8;
  -webkit-text-stroke: 12px #000;
  paint-order: stroke fill;
  text-shadow: 2px 5px 0 #000;
}
```
